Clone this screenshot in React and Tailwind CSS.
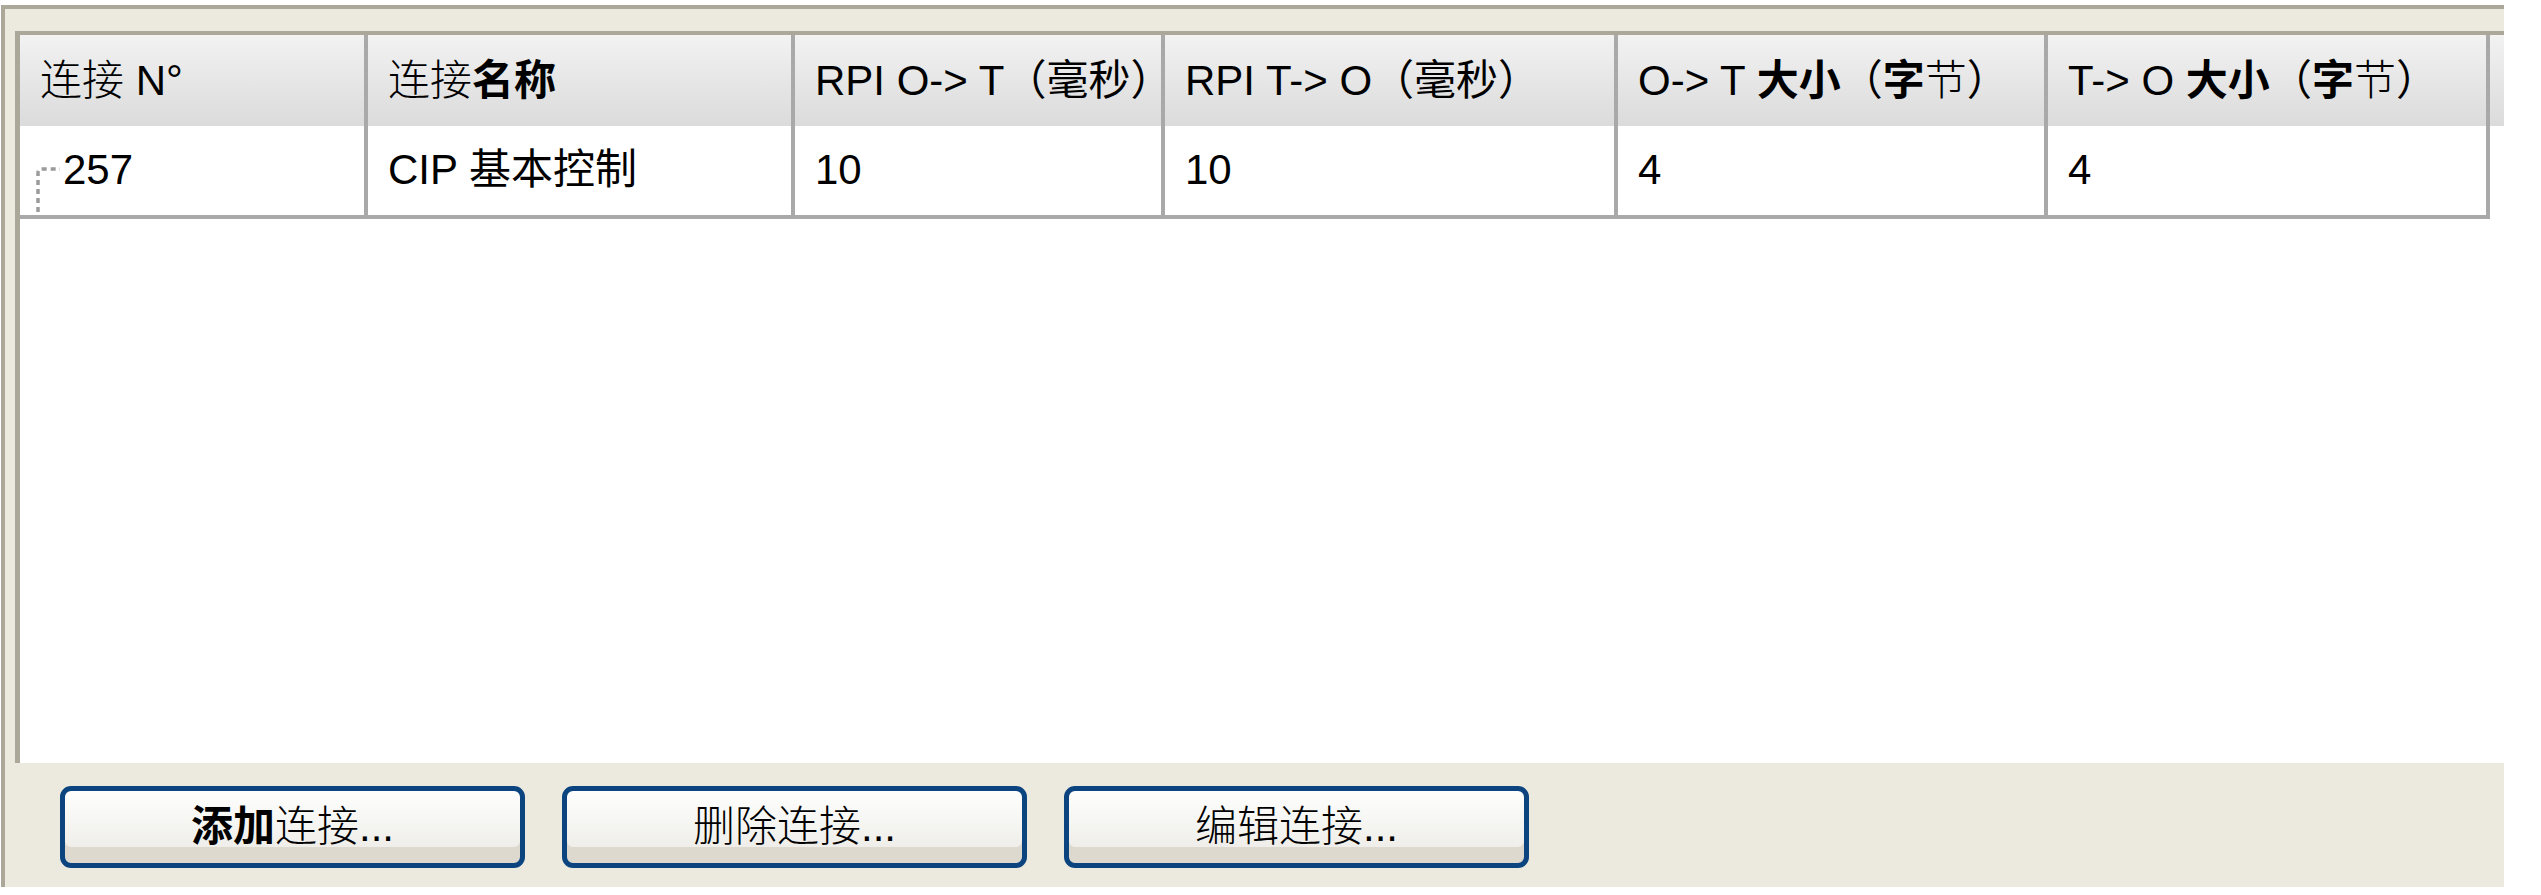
import React from "react";

const FONT = "font-['Liberation_Sans','Noto_Sans_CJK_SC',sans-serif]";

const columns = [
  { w: "w-[348px]", label: [["连接", "font-light"], [" N°", ""]] },
  { w: "w-[427px]", label: [["连接", "font-light"], ["名称", "font-bold"]] },
  { w: "w-[370px]", label: [["RPI O-> T（毫秒）", ""]] },
  { w: "w-[453px]", label: [["RPI T-> O（毫秒）", ""]] },
  { w: "w-[430px]", label: [["O-> T ", ""], ["大小", "font-bold"], ["（", ""], ["字", "font-bold"], ["节", "font-light"], ["）", ""]] },
  { w: "w-[442px]", label: [["T-> O ", ""], ["大小", "font-bold"], ["（", ""], ["字", "font-bold"], ["节", "font-light"], ["）", ""]] },
];

const row = ["257", "CIP 基本控制", "10", "10", "4", "4"];

function Connector() {
  return (
    <svg width="26" height="48" viewBox="0 0 26 48" className="mt-[40px] mr-[1px] shrink-0">
      <path
        d="M2 46 V7 Q2 3 6 3 H24"
        fill="none"
        stroke="#9b9b9b"
        strokeWidth="3.5"
        strokeDasharray="5 4"
      />
    </svg>
  );
}

function XpButton({ children }) {
  return (
    <button className="w-[465px] h-[82px] rounded-[11px] border-[5px] border-[#0b447f] bg-gradient-to-b from-[#fefefe] via-[#f4f4f1] to-[#ebe9e3] shadow-[inset_0_-16px_0_#ddd9cf] flex items-center justify-center text-[42px] text-black leading-none">
      <span>{children}</span>
    </button>
  );
}

export default function App() {
  return (
    <div className={`w-[2541px] h-[895px] bg-white overflow-hidden ${FONT}`}>
      <div className="ml-[1px] mt-[5px] w-[2503px] h-[882px] bg-[#ece9de] border-t-4 border-l-4 border-[#aca899] flex flex-col pt-[22px] pl-[10px]">
        {/* table panel */}
        <div className="h-[732px] bg-white border-t-4 border-l-[5px] border-[#aca899] flex flex-col">
          <div className="h-[91px] flex bg-gradient-to-b from-[#f2f2f2] to-[#dbdbdb]">
            {columns.map((c, i) => (
              <div
                key={i}
                className={`${c.w} shrink-0 h-full border-r-4 border-[#a9a9a9] flex items-center pl-[20px] overflow-hidden whitespace-nowrap text-[42px] text-black`}
              >
                <span>
                  {c.label.map(([t, cls], j) => (
                    <span key={j} className={cls}>
                      {t}
                    </span>
                  ))}
                </span>
              </div>
            ))}
          </div>
          <div className="h-[93px] flex">
            <div className="flex border-b-4 border-[#a9a9a9]">
              {row.map((v, i) => (
                <div
                  key={i}
                  className={`${columns[i].w} shrink-0 h-[89px] border-r-4 border-[#a9a9a9] flex items-start overflow-hidden whitespace-nowrap text-[42px] text-black ${
                    i === 0 ? "pl-[16px]" : "pl-[20px]"
                  }`}
                >
                  {i === 0 && <Connector />}
                  <span className="mt-[12px]">{v}</span>
                </div>
              ))}
            </div>
          </div>
        </div>
        {/* buttons */}
        <div className="flex gap-[37px] pt-[23px] pl-[45px]">
          <XpButton>
            <span className="font-bold">添加</span>
            <span className="font-light">连接...</span>
          </XpButton>
          <XpButton>
            <span className="font-light">删除连接...</span>
          </XpButton>
          <XpButton>
            <span className="font-light">编辑连接...</span>
          </XpButton>
        </div>
      </div>
    </div>
  );
}
